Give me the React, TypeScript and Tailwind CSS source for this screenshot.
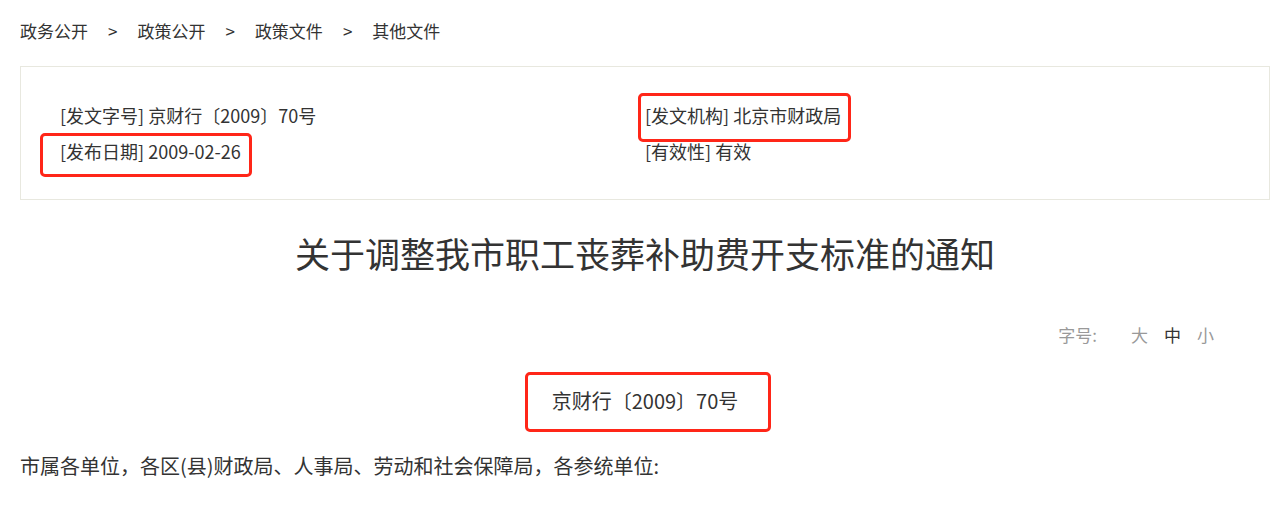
const crumbs = ['政务公开', '政策公开', '政策文件', '其他文件'];

const meta = [
  { label: '发文字号', value: '京财行〔2009〕70号' },
  { label: '发文机构', value: '北京市财政局' },
  { label: '发布日期', value: '2009-02-26' },
  { label: '有效性', value: '有效' },
];

// red markers drawn over the page
const marks = [
  'left-[40px] top-[133px] w-[212px] h-[44px]',
  'left-[638px] top-[93px] w-[213px] h-[49px]',
  'left-[525px] top-[372px] w-[246px] h-[60px]',
];

export default function App() {
  return (
    <div
      className="relative min-h-[518px] bg-white text-[#333]"
      style={{ fontFamily: '"Noto Sans CJK SC", "Noto Sans", sans-serif' }}
    >
      <div className="ml-[20px] w-[1250px]">
        {/* breadcrumb */}
        <div className="pt-4 flex items-center text-[17px] leading-[30px]">
          {crumbs.map((c, i) => (
            <span key={c} className="flex items-center">
              {i > 0 && <span className="mx-[20px]">&gt;</span>}
              <span>{c}</span>
            </span>
          ))}
        </div>

        {/* document info */}
        <div className="mt-5 border border-[#e8e8df] px-[39px] py-[30px]">
          <div className="grid grid-cols-2 text-[18px] leading-[36px]">
            {meta.map((m) => (
              <div key={m.label}>
                [{m.label}] {m.value}
              </div>
            ))}
          </div>
        </div>

        <h1 className="mt-[28px] text-center text-[35px] leading-[50px] font-normal">
          关于调整我市职工丧葬补助费开支标准的通知
        </h1>

        {/* font size switch */}
        <div className="mt-[42px] flex justify-end pr-[56px] text-[17px] leading-[30px] text-[#999]">
          <span className="mr-[26px]">字号:</span>
          <span className="mx-[8px]">大</span>
          <span className="mx-[8px] text-[#333]">中</span>
          <span className="ml-[8px]">小</span>
        </div>

        <p className="mt-[36px] text-center text-[20px] leading-[30px]">京财行〔2009〕70号</p>

        <p className="mt-[35px] text-[20px] leading-[30px]">
          市属各单位，各区(县)财政局、人事局、劳动和社会保障局，各参统单位:
        </p>
      </div>

      {marks.map((m) => (
        <div key={m} className={`absolute ${m} rounded-[5px] border-[3px] border-[#ff2618]`} />
      ))}
    </div>
  );
}
